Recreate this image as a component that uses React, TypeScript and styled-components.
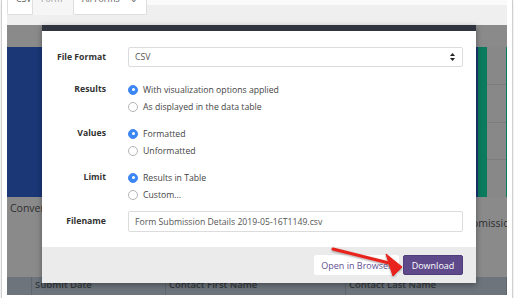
import * as React from 'react';
import styled, { createGlobalStyle } from 'styled-components';

const GlobalStyle = createGlobalStyle`
  html, body {
    margin: 0;
    padding: 0;
    background: #fff;
  }
  body {
    font-family: "Open Sans", "Liberation Sans", sans-serif;
    font-size: 8.7px;
    color: #333;
  }
`;

// outer white screenshot frame
const Frame = styled.div`
  width: 500px;
  margin: 0 2px;
  padding: 0 5px 3px;
  background: #fff;
  box-shadow: 0 0 0 1px #cfcfcf, 0 1px 3px rgba(0, 0, 0, 0.3);
`;

const Shot = styled.div`
  position: relative;
  height: 295px;
  overflow: hidden;
  display: flex;
  flex-direction: column;
  background: #8a8a8a;
`;

const TabBar = styled.div`
  height: 25px;
  flex: none;
  display: flex;
  align-items: flex-start;
  background: linear-gradient(#fafafa 0 5px, #efefef 5px);
`;

const Tab = styled.div<{ $w: number; $plain?: boolean }>`
  width: ${p => p.$w}px;
  height: 15px;
  box-sizing: border-box;
  display: flex;
  align-items: flex-start;
  justify-content: space-between;
  padding: 0 8px;
  background: ${p => (p.$plain ? '#f6f6f6' : '#fff')};
  border: ${p => (p.$plain ? 'none' : '1px solid #dedede')};
  border-top: none;
  border-radius: 0 0 2px 2px;
  color: ${p => (p.$plain ? '#999' : '#555')};
  line-height: 10px;
  overflow: hidden;
`;

const TabLabel = styled.span`
  transform: translateY(-6px);
`;

const Backdrop = styled.div`
  flex: 1;
  display: flex;
  flex-direction: column;
`;

const GrayBand = styled.div<{ $h: number }>`
  height: ${p => p.$h}px;
  flex: none;
  background: #8a8a8a;
`;

const TileRow = styled.div`
  height: 150px;
  flex: none;
  display: flex;
`;

const BlueTile = styled.div`
  width: 471px;
  background: #1b3776;
`;

const GreenBar = styled.div<{ $w: number }>`
  width: ${p => p.$w}px;
  background: #0b7a5d;
`;

const GrayBars = styled.div`
  flex: 1;
  display: flex;
  flex-direction: column;
  background: #888;
  & > div {
    flex: 1;
    border-bottom: 1px solid #7c7c7c;
  }
  & > div:last-child {
    border-bottom: none;
  }
`;

const CaptionRow = styled.div`
  height: 80px;
  flex: none;
  display: flex;
  justify-content: space-between;
  background: #8a8a8a;
  color: #2f2f2f;
  font-size: 10.5px;
  overflow: hidden;
`;

const Caption = styled.div<{ $top: number; $right?: number }>`
  padding: ${p => p.$top}px 0 0 3px;
  margin-right: ${p => -(p.$right || 0)}px;
  white-space: nowrap;
`;

const HeaderRow = styled.div`
  flex: 1;
  display: grid;
  grid-template-columns: 25px 134px 180px 1fr;
  background: #6d747c;
  color: #33383d;
  font-weight: 600;
  font-size: 9.5px;
  & > div {
    padding: 1px 0 0 3px;
    border-right: 1px solid #60666d;
    white-space: nowrap;
  }
`;

// modal dialog (overlay)
const Modal = styled.div`
  position: absolute;
  left: 35px;
  top: 25px;
  width: 434px;
  height: 258px;
  display: flex;
  flex-direction: column;
  background: #fff;
  box-shadow: 0 2px 6px rgba(0, 0, 0, 0.35);
`;

const ModalHead = styled.div`
  height: 6px;
  background: #2f343e;
`;

const ModalBody = styled.div`
  flex: 1;
  padding: 16px 13px 0 0;
`;

const FieldRow = styled.div<{ $mt?: number }>`
  display: flex;
  margin-top: ${p => p.$mt || 0}px;
`;

const Label = styled.div<{ $lh: number }>`
  width: 64px;
  margin-right: 22px;
  text-align: right;
  font-weight: 700;
  color: #333;
  line-height: ${p => p.$lh}px;
`;

const Control = styled.div`
  flex: 1;
`;

const Box = styled.div<{ $h: number }>`
  height: ${p => p.$h}px;
  box-sizing: border-box;
  border: 1px solid #dcdcdc;
  border-radius: 2px;
  padding: 0 7px 0 6px;
  display: flex;
  align-items: center;
  justify-content: space-between;
  color: #555;
`;

const RadioRow = styled.div`
  height: 17px;
  display: flex;
  align-items: center;
  color: #444;
`;

const RadioDot = styled.span<{ $on?: boolean }>`
  width: 10px;
  height: 10px;
  box-sizing: border-box;
  border-radius: 50%;
  margin-right: 5px;
  display: flex;
  align-items: center;
  justify-content: center;
  background: ${p => (p.$on ? '#3d87f5' : '#fff')};
  border: 1px solid ${p => (p.$on ? '#3d87f5' : '#b5b5b5')};
  &::after {
    content: '';
    width: 3px;
    height: 3px;
    border-radius: 50%;
    background: ${p => (p.$on ? '#fff' : 'transparent')};
  }
`;

const ModalFoot = styled.div`
  height: 36px;
  display: flex;
  align-items: center;
  justify-content: flex-end;
  gap: 4px;
  padding-right: 13px;
  background: #ebebeb;
`;

const Button = styled.div<{ $primary?: boolean; $w: number }>`
  width: ${p => p.$w}px;
  height: 20px;
  box-sizing: border-box;
  display: flex;
  align-items: center;
  justify-content: center;
  border-radius: 2px;
  font-size: 9px;
  background: ${p => (p.$primary ? '#5e4a8b' : '#fff')};
  border: 1px solid ${p => (p.$primary ? '#4f3c7a' : '#fff')};
  color: ${p => (p.$primary ? '#fff' : '#5f5094')};
`;

const ArrowLayer = styled.svg`
  position: absolute;
  left: 0;
  top: 0;
  width: 500px;
  height: 295px;
  pointer-events: none;
`;

const SelectArrows = () => (
  <svg width="5" height="8" viewBox="0 0 5 8">
    <path d="M2.5 0 L5 3 H0 Z M2.5 8 L5 5 H0 Z" fill="#222" />
  </svg>
);

const Radio = ({ on, children }: { on?: boolean; children: React.ReactNode }) => (
  <RadioRow>
    <RadioDot $on={on} />
    {children}
  </RadioRow>
);

export default function App() {
  return (
    <>
      <GlobalStyle />
      <Frame>
        <Shot>
          <TabBar>
            <Tab $w={26}>
              <TabLabel>CSV</TabLabel>
            </Tab>
            <Tab $w={40} $plain>
              <TabLabel>Form</TabLabel>
            </Tab>
            <Tab $w={74}>
              <TabLabel>All Forms</TabLabel>
              <TabLabel>⌄</TabLabel>
            </Tab>
          </TabBar>

          <Backdrop>
            <GrayBand $h={22} />
            <TileRow>
              <BlueTile />
              <GreenBar $w={9} />
              <GrayBars>
                <div />
                <div />
                <div />
                <div />
              </GrayBars>
              <GreenBar $w={1} />
            </TileRow>
            <CaptionRow>
              <Caption $top={4}>Conversion Rate</Caption>
              <Caption $top={19} $right={14}>
                Submissions
              </Caption>
            </CaptionRow>
            <HeaderRow>
              <div />
              <div>Submit Date</div>
              <div>Contact First Name</div>
              <div>Contact Last Name</div>
            </HeaderRow>
          </Backdrop>

          <Modal>
            <ModalHead />
            <ModalBody>
              <FieldRow>
                <Label $lh={20}>File Format</Label>
                <Control>
                  <Box $h={20}>
                    <span>CSV</span>
                    <SelectArrows />
                  </Box>
                </Control>
              </FieldRow>
              <FieldRow $mt={14}>
                <Label $lh={17}>Results</Label>
                <Control>
                  <Radio on>With visualization options applied</Radio>
                  <Radio>As displayed in the data table</Radio>
                </Control>
              </FieldRow>
              <FieldRow $mt={10}>
                <Label $lh={17}>Values</Label>
                <Control>
                  <Radio on>Formatted</Radio>
                  <Radio>Unformatted</Radio>
                </Control>
              </FieldRow>
              <FieldRow $mt={10}>
                <Label $lh={17}>Limit</Label>
                <Control>
                  <Radio on>Results in Table</Radio>
                  <Radio>Custom...</Radio>
                </Control>
              </FieldRow>
              <FieldRow $mt={8}>
                <Label $lh={21}>Filename</Label>
                <Control>
                  <Box $h={21}>Form Submission Details 2019-05-16T1149.csv</Box>
                </Control>
              </FieldRow>
            </ModalBody>
            <ModalFoot>
              <Button $w={85}>Open in Browser</Button>
              <Button $w={60} $primary>
                Download
              </Button>
            </ModalFoot>
          </Modal>

          <ArrowLayer viewBox="0 0 500 295">
            <defs>
              <filter id="arrowShadow" x="-20%" y="-50%" width="140%" height="200%">
                <feDropShadow dx="0" dy="1" stdDeviation="1" floodColor="#000" floodOpacity="0.4" />
              </filter>
            </defs>
            <g filter="url(#arrowShadow)" fill="#e8231b" stroke="#e8231b">
              <line x1="326" y1="249" x2="384" y2="263.5" strokeWidth="3" strokeLinecap="round" />
              <polygon points="379,254 395,267 386,276" strokeWidth="1" strokeLinejoin="round" />
            </g>
          </ArrowLayer>
        </Shot>
      </Frame>
    </>
  );
}
